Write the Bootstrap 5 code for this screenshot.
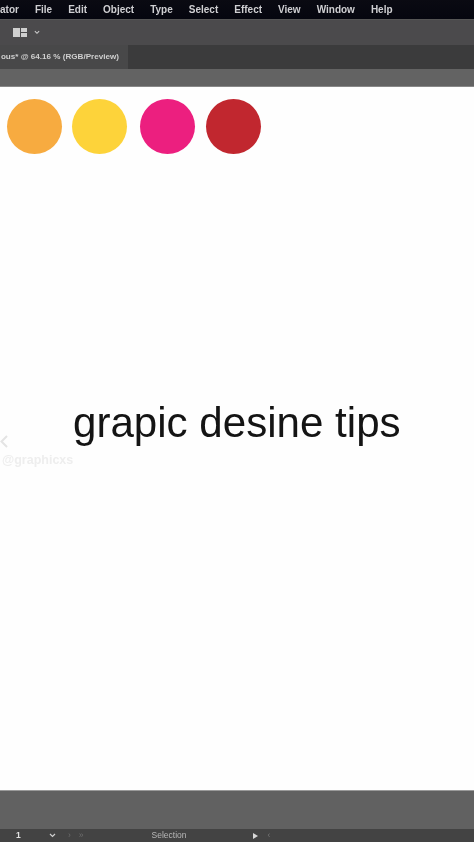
<!DOCTYPE html>
<html lang="en">
<head>
<meta charset="utf-8">
<title>grapic desine tips</title>
<link rel="stylesheet" href="https://cdn.jsdelivr.net/npm/bootstrap@5.3.0/dist/css/bootstrap.min.css">
<style>
html,body{height:100%;overflow:hidden}
body{background:#fff;font-family:"Liberation Sans",Arial,sans-serif}
.stage{height:842px;position:relative;overflow:hidden}
.soft{filter:blur(.5px)}
.menubar{height:19px;background:linear-gradient(#0a0a12,#05060f);color:#cfcfd2;font-size:10px;font-weight:700;gap:16px;flex:none}
.toolrow{height:26px;background:#4b4a4c;border-top:1px solid #555;padding-left:13px;gap:7px;flex:none}
.tabrow{height:24px;background:#3b3b3c;flex:none}
.doc-tab{width:128px;background:#484849;color:#cfcfcf;font-size:8.1px;font-weight:700;white-space:nowrap;padding-right:9px}
.ctrlrow{height:18px;background:#636363;flex:none;border-bottom:1px solid #888}
.canvas-area{background:#fefefe;min-height:0}
.swatches{padding-top:12px;padding-left:7px;height:312px;flex:none}
.dot{width:55px;height:55px;border-radius:50%;flex:none}
.s1{background:#f7ab40;margin-right:10px}
.s2{background:#fdd33a;margin-right:13px}
.s3{background:#ec1f7f;margin-right:11px}
.s4{background:#c1272f}
.headline{font-family:"Liberation Sans",Arial,sans-serif;font-size:42.1px;line-height:48px;color:#141414;padding-left:73px;white-space:nowrap;margin:0}
.wm-chevron{position:absolute;left:0;top:435px}
.wm-text{position:absolute;left:2px;top:453px;color:#eeeeee;font-size:12.5px;line-height:14px;font-weight:700;filter:blur(.7px)}
.bottomgray{height:39px;background:#616161;border-top:1px solid #9a9a9a;flex:none}
.statusbar{height:13px;background:#434343;color:#b8b8b8;font-size:8.5px;flex:none}
.st-num{margin-left:16px;color:#e2e2e2;font-weight:700;width:33px}
.st-nav{margin-left:12px;gap:8px;color:#6d6d6d}
.st-sel{margin-left:68px;width:101px;white-space:nowrap}
.st-back{margin-left:10px;color:#777}
</style>
</head>
<body>
<div class="stage d-flex flex-column soft">
  <div class="menubar d-flex align-items-center">
    <span>ator</span><span>File</span><span>Edit</span><span>Object</span><span>Type</span><span>Select</span><span>Effect</span><span>View</span><span>Window</span><span>Help</span>
  </div>
  <div class="toolrow d-flex align-items-center">
    <svg width="14" height="9" viewBox="0 0 14 9"><path fill="#cfcfcf" d="M0 0h7v9H0zM8 0h6v4H8zM8 5h6v4H8z"/></svg>
    <svg width="6" height="5" viewBox="0 0 7 5"><path fill="none" stroke="#cfcfcf" stroke-width="1.2" d="M1 1l2.5 2.5L6 1"/></svg>
  </div>
  <div class="tabrow d-flex">
    <div class="doc-tab d-flex align-items-center justify-content-end">ous* @ 64.16 % (RGB/Preview)</div>
  </div>
  <div class="ctrlrow"></div>
  <main class="canvas-area flex-grow-1">
    <div class="swatches d-flex align-items-start">
      <div class="dot s1"></div><div class="dot s2"></div><div class="dot s3"></div><div class="dot s4"></div>
    </div>
    <h1 class="headline fw-normal">grapic desine tips</h1>
  </main>
  <svg class="wm-chevron" width="8" height="13" viewBox="0 0 8 13"><path fill="none" stroke="#e4e4e4" stroke-width="2" d="M7 1L1.5 6.5 7 12"/></svg>
  <div class="wm-text">@graphicxs</div>
  <div class="bottomgray"></div>
  <div class="statusbar d-flex align-items-center">
    <span class="st-num">1</span>
    <svg width="7" height="5" viewBox="0 0 7 5"><path fill="none" stroke="#cfcfcf" stroke-width="1.2" d="M1 1l2.5 2.5L6 1"/></svg>
    <span class="st-nav d-flex"><span>&rsaquo;</span><span>&raquo;</span></span>
    <span class="st-sel">Selection</span>
    <svg width="5" height="6" viewBox="0 0 5 6"><path fill="#d8d8d8" d="M0 0l5 3-5 3z"/></svg>
    <span class="st-back">&lsaquo;</span>
  </div>
</div>
<script src="https://cdn.jsdelivr.net/npm/bootstrap@5.3.0/dist/js/bootstrap.bundle.min.js"></script>
</body>
</html>
